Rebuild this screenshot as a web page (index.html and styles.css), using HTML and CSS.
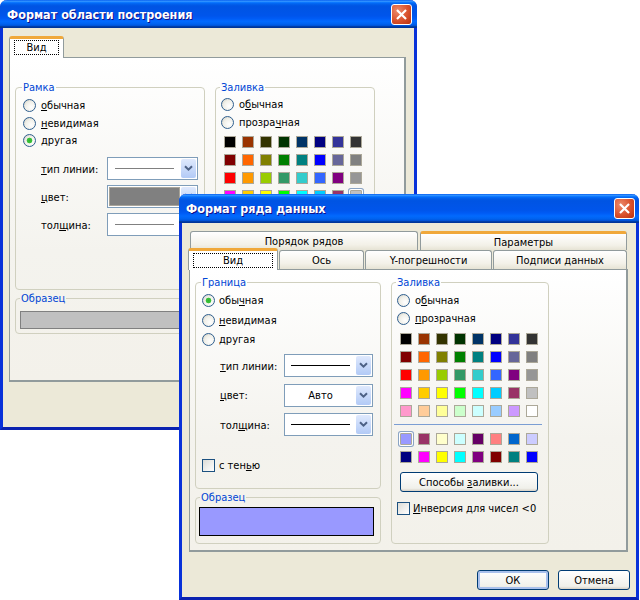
FILE: index.html
```html
<!DOCTYPE html>
<html lang="ru">
<head>
  <meta charset="UTF-8" />
  <title>Формат ряда данных</title>
  <link rel="stylesheet" href="styles.css">
</head>
<body>
  <svg class="defs" width="0" height="0">
    <symbol id="chevron" viewBox="0 0 9 7">
      <path d="M1 1.2 L4.5 4.7 L8 1.2" fill="none" stroke="#4d6185" stroke-width="2" />
    </symbol>
    <symbol id="close" viewBox="0 0 21 21">
      <path d="M5.5 5.5 L15.5 15.5 M15.5 5.5 L5.5 15.5" fill="none" stroke="#fff" stroke-width="2.4" />
    </symbol>
  </svg>

  <!-- back window -->
  <div class="window window-back">
    <div class="titlebar">
      <span class="title">Формат области построения</span>
      <span class="close"><svg width="19" height="19"><use href="#close" /></svg></span>
    </div>
    <div class="client">
      <div class="tabs-single">
        <div class="tab tab-active tab-only"><span class="focus">Вид</span></div>
      </div>
      <div class="panel">
        <div class="groups">
          <div class="left-col">
            <fieldset class="group group-frame">
              <legend>Рамка</legend>
              <div class="radio-row"><span class="radio"></span><span><u>о</u>бычная</span></div>
              <div class="radio-row"><span class="radio"></span><span><u>н</u>евидимая</span></div>
              <div class="radio-row"><span class="radio radio-on"></span><span>другая</span></div>
              <div class="fields">
                <div class="field"><label><u>т</u>ип линии:</label>
                  <div class="combo"><span class="combo-value"><i class="line line-grey"></i></span><span class="combo-btn"><svg width="9" height="7"><use href="#chevron" /></svg></span></div>
                </div>
                <div class="field"><label><u>ц</u>вет:</label>
                  <div class="combo"><span class="combo-value"><i class="combo-fill"></i></span><span class="combo-btn"><svg width="9" height="7"><use href="#chevron" /></svg></span></div>
                </div>
                <div class="field"><label>тол<u>щ</u>ина:</label>
                  <div class="combo"><span class="combo-value"><i class="line line-grey"></i></span><span class="combo-btn"><svg width="9" height="7"><use href="#chevron" /></svg></span></div>
                </div>
              </div>
            </fieldset>
            <fieldset class="group group-sample">
              <legend>Образец</legend>
              <div class="sample sample-grey"></div>
            </fieldset>
          </div>
          <fieldset class="group group-fill">
            <legend>Заливка</legend>
            <div class="radio-row"><span class="radio"></span><span>о<u>б</u>ычная</span></div>
            <div class="radio-row"><span class="radio"></span><span>прозра<u>ч</u>ная</span></div>
            <div class="palette" data-set="main" data-selected="31"></div>
          </fieldset>
        </div>
      </div>
    </div>
  </div>

  <!-- front window -->
  <div class="window window-front">
    <div class="titlebar">
      <span class="title">Формат ряда данных</span>
      <span class="close"><svg width="19" height="19"><use href="#close" /></svg></span>
    </div>
    <div class="client">
      <div class="tabs-top">
        <div class="tab">Порядок рядов</div>
        <div class="tab tab-orange">Параметры</div>
      </div>
      <div class="tabs-bottom">
        <div class="tab tab-active"><span class="focus">Вид</span></div>
        <div class="tab">Ось</div>
        <div class="tab">Y-погрешности</div>
        <div class="tab">Подписи данных</div>
      </div>
      <div class="panel">
        <div class="groups">
          <div class="left-col">
            <fieldset class="group group-frame">
              <legend>Граница</legend>
              <div class="radio-row"><span class="radio radio-on"></span><span>обы<u>ч</u>ная</span></div>
              <div class="radio-row"><span class="radio"></span><span><u>н</u>евидимая</span></div>
              <div class="radio-row"><span class="radio"></span><span>другая</span></div>
              <div class="fields">
                <div class="field"><label><u>т</u>ип линии:</label>
                  <div class="combo"><span class="combo-value"><i class="line"></i></span><span class="combo-btn"><svg width="9" height="7"><use href="#chevron" /></svg></span></div>
                </div>
                <div class="field"><label><u>ц</u>вет:</label>
                  <div class="combo"><span class="combo-value">Авто</span><span class="combo-btn"><svg width="9" height="7"><use href="#chevron" /></svg></span></div>
                </div>
                <div class="field"><label>тол<u>щ</u>ина:</label>
                  <div class="combo"><span class="combo-value"><i class="line"></i></span><span class="combo-btn"><svg width="9" height="7"><use href="#chevron" /></svg></span></div>
                </div>
              </div>
              <div class="check-row check-shadow"><span class="check"></span><span>с тен<u>ь</u>ю</span></div>
            </fieldset>
            <fieldset class="group group-sample">
              <legend>Образец</legend>
              <div class="sample sample-blue"></div>
            </fieldset>
          </div>
          <fieldset class="group group-fill">
            <legend>Заливка</legend>
            <div class="radio-row"><span class="radio"></span><span>о<u>б</u>ычная</span></div>
            <div class="radio-row"><span class="radio"></span><span><u>п</u>розрачная</span></div>
            <div class="palette" data-set="main"></div>
            <div class="separator"></div>
            <div class="palette" data-set="chart" data-selected="0"></div>
            <button class="btn btn-wide">Способы <u>з</u>аливки...</button>
            <div class="check-row check-invert"><span class="check"></span><span><u>И</u>нверсия для чисел &lt;0</span></div>
          </fieldset>
        </div>
      </div>
      <div class="actions">
        <button class="btn btn-default">ОК</button>
        <button class="btn">Отмена</button>
      </div>
    </div>
  </div>

  <script>
    const colors = {
      main: [
        "#000000", "#993300", "#333300", "#003300", "#003366", "#000080", "#333399", "#333333",
        "#800000", "#ff6600", "#808000", "#008000", "#008080", "#0000ff", "#666699", "#808080",
        "#ff0000", "#ff9900", "#99cc00", "#339966", "#33cccc", "#3366ff", "#800080", "#969696",
        "#ff00ff", "#ffcc00", "#ffff00", "#00ff00", "#00ffff", "#00ccff", "#993366", "#c0c0c0",
        "#ff99cc", "#ffcc99", "#ffff99", "#ccffcc", "#ccffff", "#99ccff", "#cc99ff", "#ffffff"
      ],
      chart: [
        "#9999ff", "#993366", "#ffffcc", "#ccffff", "#660066", "#ff8080", "#0066cc", "#ccccff",
        "#000080", "#ff00ff", "#ffff00", "#00ffff", "#800080", "#800000", "#008080", "#0000ff"
      ]
    };

    document.querySelectorAll(".palette").forEach(palette => {
      colors[palette.dataset.set].forEach((color, i) => {
        const swatch = document.createElement("span");
        swatch.className = "swatch";
        swatch.style.background = color;
        if (palette.dataset.selected === String(i)) swatch.classList.add("swatch-on");
        palette.appendChild(swatch);
      });
    });
  </script>
</body>
</html>
```

FILE: styles.css
```css
body {
  margin: 0;
  background: #fff;
  font-family: "DejaVu Sans Condensed", "DejaVu Sans", sans-serif;
  font-size: 11px;
  color: #000;
  overflow: hidden;
}
u { text-underline-offset: 1px; }
.defs { position: absolute; }

.window {
  position: absolute;
  box-sizing: border-box;
  background: #ece9d8;
  border: 3px solid #0831d9;
  border-top: none;
  border-bottom-color: #0a22b0;
  border-radius: 7px 7px 0 0;
}
.window-back { left: 0; top: 0; width: 417px; height: 430px; }
.window-front { left: 179px; top: 194px; width: 460px; height: 406px; }

.titlebar {
  display: flex;
  align-items: center;
  justify-content: space-between;
  margin: 0 -3px;
  height: 29px;
  padding: 0 4px 0 7px;
  border-radius: 7px 7px 0 0;
  background: linear-gradient(180deg, #0058ee 0, #3593ff 4%, #288eff 6%, #127dff 8%, #036ffc 10%, #0262ee 14%, #0057e5 20%, #0054e3 24%, #0055eb 56%, #005bf5 66%, #026afe 76%, #0062ef 86%, #0052d6 92%, #0040ab 94%, #003092 100%);
}
.window-back .titlebar { height: 28px; padding: 0 5px 0 7px; }
.title {
  color: #fff;
  font-family: "DejaVu Sans Condensed", "DejaVu Sans", sans-serif;
  font-weight: bold;
  font-size: 12.5px;
  text-shadow: 1px 1px #0f1089;
}
.close {
  display: flex;
  align-items: center;
  justify-content: center;
  width: 19px;
  height: 19px;
  border: 1px solid #fff;
  border-radius: 3px;
  background: radial-gradient(circle at 30% 30%, #ec8a6c, #d9512c 55%, #b8300f);
}

.client { padding: 8px 7px 0; }
.window-back .client { padding-left: 6px; }

/* tabs */
.tab {
  box-sizing: border-box;
  display: flex;
  align-items: center;
  justify-content: center;
  padding-top: 1px;
  border: 1px solid #919b9c;
  border-bottom: none;
  border-radius: 3px 3px 0 0;
  background: linear-gradient(180deg, #fff, #f3f1e8 70%, #e6e3d4);
}
.tab-orange, .tab-active {
  border-top: 3px solid #f0a83a;
}
.tab-active {
  position: relative;
  padding-top: 0;
  background: #fff;
  z-index: 1;
}
.focus {
  box-sizing: border-box;
  display: block;
  border: 1px dotted #000;
  text-align: center;
  width: calc(100% - 8px);
  height: 15px;
  line-height: 13px;
}
.tabs-single { display: flex; height: 21px; }
.tab-only { width: 55px; height: 22px; padding-bottom: 2px; }

.tabs-top {
  display: grid;
  grid-template-columns: 228px 207px;
  gap: 2px;
  height: 19px;
  padding-left: 1px;
}
.tabs-bottom {
  display: grid;
  grid-template-columns: 90px 85px 127px 134px;
  gap: 1px;
  height: 19px;
  margin-left: -1px;
}
.tabs-bottom .tab-active { margin: -2px 0 -1px 0; }

.panel {
  box-sizing: border-box;
  border: 1px solid #919b9c;
  border-right-width: 2px;
  border-bottom-width: 2px;
  background: linear-gradient(180deg, #fff, #f4f3ee 60%, #f3f1ea);
}
.window-back .panel { width: 397px; height: 325px; padding: 23px 0 0 5px; }
.window-front .panel { width: 439px; height: 283px; padding: 6px 0 0 5px; }

/* groups */
.groups { display: flex; gap: 10px; align-items: flex-start; }
.left-col { display: flex; flex-direction: column; gap: 2px; }
.group {
  box-sizing: border-box;
  margin: 0;
  min-width: 0;
  padding: 0 5px;
  border: 1px solid #d0d0bf;
  border-radius: 4px;
}
.group legend {
  padding: 0 1px 0 1px;
  margin-left: -1px;
  color: #0046d5;
  line-height: 13px;
}
.window-back .group-frame { width: 190px; height: 209px; }
.window-back .group-sample { width: 190px; height: 42px; }
.window-back .group-fill { width: 160px; height: 253px; padding-top: 1.5px; }
.window-front .group-frame { width: 186px; height: 213px; }
.window-front .group-sample { width: 186px; height: 53px; }
.window-front .group-fill { width: 158px; height: 268px; padding-top: 2px; }

.radio-row, .check-row {
  display: flex;
  align-items: center;
  gap: 5px;
  height: 18px;
}
.window-back .group-frame { padding-top: 3px; padding-left: 7px; }
.window-back .group-frame .radio-row { height: 17.5px; gap: 5px; }
.window-front .group-frame { padding-top: 2px; padding-left: 6px; }
.window-front .group-frame .radio-row { height: 19.5px; gap: 4px; }

.radio {
  box-sizing: border-box;
  flex: none;
  width: 13px;
  height: 13px;
  border: 1px solid #2f5f8f;
  border-radius: 50%;
  background: radial-gradient(circle at 65% 65%, #fff, #f0efe8 55%, #c9c7ba);
}
.radio-on {
  background: radial-gradient(circle, #2fb32f 0, #3cc43c 2.5px, transparent 3.2px), radial-gradient(circle at 65% 65%, #fff, #f0efe8 55%, #c9c7ba);
}
.check {
  box-sizing: border-box;
  flex: none;
  width: 13px;
  height: 13px;
  border: 1px solid #1c5180;
  background: linear-gradient(135deg, #dcdcd7, #fff);
}

/* combo fields */
.field { display: flex; align-items: center; height: 23px; }
.field label { padding-top: 1px; }
.combo {
  box-sizing: border-box;
  display: flex;
  align-items: center;
  border: 1px solid #7f9db9;
  background: #fff;
  height: 23px;
  padding-right: 1px;
}
.combo-value {
  flex: 1;
  display: flex;
  justify-content: center;
  align-items: center;
  height: 100%;
}
.combo-btn {
  display: flex;
  align-items: center;
  justify-content: center;
  width: 15px;
  height: 19px;
  border-radius: 2px;
  background: linear-gradient(180deg, #dfe9fd, #b2caf6);
}
.line { display: block; width: 59px; height: 1px; background: #000; }
.line-grey { background: #808080; }
.combo-fill {
  box-sizing: border-box;
  display: block;
  width: 71px;
  height: 19px;
  background: #808080;
  border: 1px solid #a8a499;
}
.window-back .fields { margin: 7.5px 0 0 18px; display: flex; flex-direction: column; gap: 5px; }
.window-back .field label { width: 66px; }
.window-back .combo { width: 91px; }
.window-front .fields { margin: 4.5px 0 0 18px; display: flex; flex-direction: column; gap: 6.5px; }
.window-front .field label { width: 64px; }
.window-front .combo { width: 89px; }

.check-shadow { margin-top: 20px; gap: 4px; }
.check-invert { margin-top: 7px; gap: 3px; }

/* samples */
.sample { box-sizing: border-box; }
.sample-grey { height: 18px; background: #c0c0c0; border: 1px solid #808080; margin: 6px 0 0 -1px; }
.sample-blue { height: 29px; background: #9999ff; border: 1px solid #000; margin: 3px 1px 0 -2px; }
.window-back .sample-grey { width: 200px; }

/* palette */
.palette {
  display: grid;
  grid-template-columns: repeat(8, 12px);
  gap: 6px;
  margin-left: 3px;
}
.window-back .palette { margin-top: 4.5px; }
.window-front .palette { margin-top: 6px; }
.window-front .separator + .palette { margin-top: 8px; }
.swatch {
  box-sizing: border-box;
  width: 12px;
  height: 12px;
  border: 1px solid #aca899;
}
.swatch-on {
  border-radius: 1px;
  box-shadow: 0 0 0 1px #fff, 0 0 0 2px #8aa4c4;
}
.separator {
  height: 1px;
  margin: 7px 0 0 -3px;
  width: 148px;
  background: #7b9ed3;
}

/* buttons */
.btn {
  box-sizing: border-box;
  width: 72px;
  height: 20px;
  padding: 0;
  font: inherit;
  color: #000;
  border: 1px solid #003c74;
  border-radius: 3px;
  background: linear-gradient(180deg, #fff, #f0f0ea 85%, #d6d0c5);
}
.btn-wide { display: block; width: 138px; height: 20px; margin: 9px 0 0 3px; }
.btn-default { box-shadow: inset 0 0 0 2px #a9c0ec; }
.actions {
  display: flex;
  justify-content: flex-end;
  gap: 9px;
  margin: 18px -1px 0 0;
}
```
